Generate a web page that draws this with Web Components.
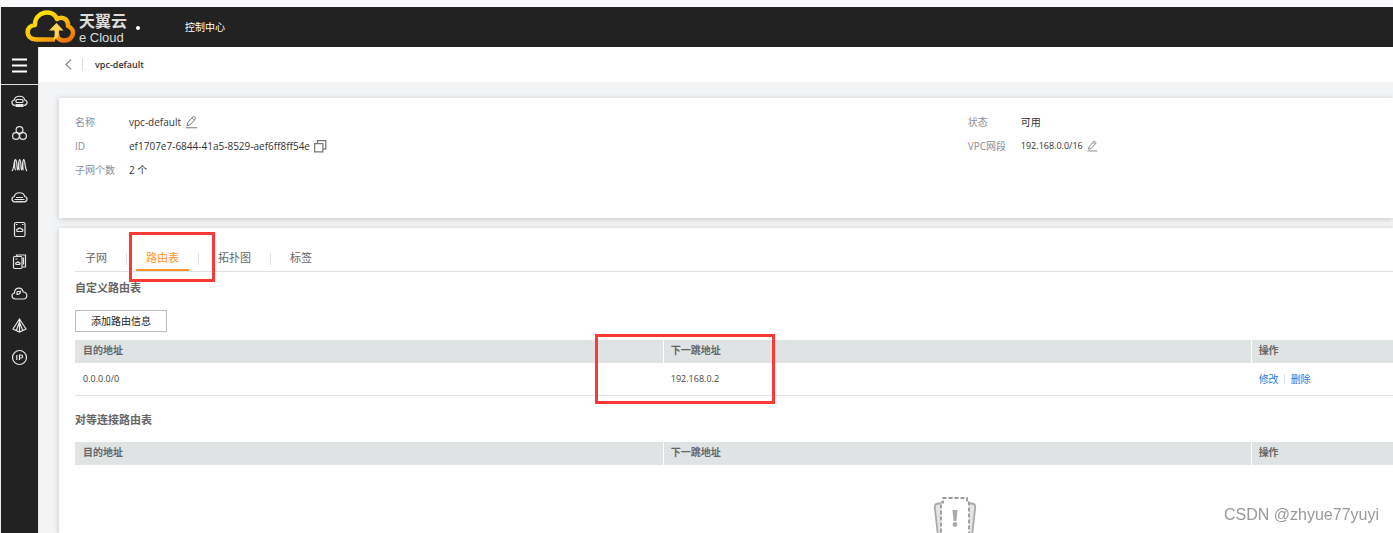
<!DOCTYPE html>
<html lang="zh-CN">
<head>
<meta charset="utf-8">
<title>控制中心</title>
<style>
  body { margin: 0; background: #f3f4f6; color: #333; font: 10px/16px "Open Sans", "Noto Sans CJK SC", sans-serif; overflow: hidden; }
</style>
</head>
<body>
<vpc-console>
  <top-bar slot="top">控制中心</top-bar>
  <side-nav slot="side"></side-nav>
  <crumb-bar slot="crumb">vpc-default</crumb-bar>
  <content-card>
    <info-grid>
      <info-item label="名称">vpc-default <icon-button icon="edit" label="修改名称"></icon-button></info-item>
      <info-item label="状态" short>可用</info-item>
      <info-item label="ID">ef1707e7-6844-41a5-8529-aef6ff8ff54e <icon-button icon="copy" label="复制"></icon-button></info-item>
      <info-item label="VPC网段" code short>192.168.0.0/16 <icon-button icon="edit" label="修改网段" small></icon-button></info-item>
      <info-item label="子网个数">2 个</info-item>
    </info-grid>
  </content-card>
  <content-card fill>
    <tab-bar tabs="子网,路由表,拓扑图,标签" current="1"></tab-bar>
    <route-section heading="自定义路由表" action="添加路由信息" rows="0.0.0.0/0,192.168.0.2" marked></route-section>
    <route-section heading="对等连接路由表"><empty-mark></empty-mark></route-section>
  </content-card>
</vpc-console>
<water-mark>CSDN @zhyue77yuyi</water-mark>

<script>
(function() {
  'use strict';

  const icons = {
    menu: '<path d="M1 2.500h15M1 8.500h15M1 14.500h15" stroke-width="2"/>',
    server: '<path d="M4.500 12.500C0 12.500 0 7.500 3.300 7 4.500 2 12.500 2 13.700 7c3.300.500 3.300 5.500-1.200 5.500"/><rect x="5" y="6.500" width="7" height="3" rx="1"/><path d="M4.500 12.500h8" stroke-width="3"/>',
    group: '<circle cx="8.500" cy="5" r="3.400"/><circle cx="5" cy="11" r="3.400"/><circle cx="12" cy="11" r="3.400"/>',
    wave: '<path d="M1 14C3.500 12 2.500 2.500 4.500 2.500S5.500 13 6.700 13 7 2.500 8.700 2.500 9.500 13 10.700 13 11 2.500 12.700 2.500 13.500 12 16 14M4.500 2.500C3 5 3.500 13 5 13M8.700 2.500C7 5 8 13 8.700 13M12.700 2.500C11 5 12 13 12.700 13"/>',
    disk: '<path d="M4.500 13C0 13 0 8 3.300 7.500 4.500 2.500 12.500 2.500 13.700 7.500c3.300.500 3.300 5.500-1.200 5.500z"/><path d="M5 8.500h7M3.500 10.500h10M4.500 12.500h8" />',
    card: '<rect x="3.500" y="1.500" width="10.500" height="14" rx="1.500"/><path d="M6.200 10.500c-1.200-1-.2-2.700.8-2.400.500-1.400 3-1.400 3.500 0 1.200-.300 2 1.400.800 2.400zM5 3.500h1.500M11 3.500h1.500"/>',
    cards: '<rect x="2.500" y="3.500" width="8.500" height="12" rx="1.200"/><path d="M5.500 3.500V2h9v12h-3.500M12.500 4.500v7M5 11.500c-.8-1 0-2 .8-1.800.400-1 1.800-1 2.200 0 .8-.200 1.500.8.8 1.800zM4.500 6h2"/>',
    cloud: '<path d="M4.500 14C-.2 13.500.2 8.500 3.500 8 3.500 2 11 1.500 12.200 7c5 0 4.500 6.800.300 7zM6 10V6.500M6 6.500h3.500M6 9.500C8 9.500 9.500 8.500 9.500 5.500"/>',
    cone: '<path d="M8.500 2 2 12l6.500 3L15 12zM8.500 2v13M8.500 5 5.500 13M8.500 5l3 8"/>',
    ip: '<circle cx="8.500" cy="8.500" r="7"/><path d="M5.800 6v5M8.500 11V6h1.500c2.200 0 2.200 3 0 3H8.500"/>',
    back: '<path d="M11.500 3 5.500 8.500l6 5.500"/>',
    edit: '<path d="M3.500 13 4.500 9.300 11.500 1.500l3 2.500L7.300 12zM9.800 3.500 12.500 6M2 15.500h14"/>',
    copy: '<path d="M2 5.500h10v10H2zM5.500 5.500V2H15.500v10H12" stroke-width="1.500"/>'
  };

  const svg = (name, size) => `<svg width="${size}" height="${size}" viewBox="0 0 17 17" fill="none" stroke="currentColor" stroke-width="1.200" aria-hidden="true">${icons[name]}</svg>`;

  const define = (name, render) => customElements.define(name, class extends HTMLElement {
    constructor() {
      super();
      this.attachShadow({mode: 'open'});
    }
    connectedCallback() {
      this.shadowRoot.innerHTML = render(this);
    }
  });

  define('vpc-console', () => `
    <style>
      :host { display: grid; grid-template: auto 1fr / auto 1fr; height: 100vh; border-top: 7px solid #fafafc; border-left: 1px solid #eee; box-sizing: border-box; overflow: hidden; }
      header { grid-column: 1 / 3; }
      section { display: flex; flex-direction: column; min-width: 0; min-height: 0; }
      main { display: flex; flex-direction: column; gap: 10px; flex: 1; min-height: 0; padding: 16px 0 0 20px; }
    </style>
    <header><slot name="top"></slot></header>
    <slot name="side"></slot>
    <section><slot name="crumb"></slot><main><slot></slot></main></section>`);

  define('top-bar', () => `
    <style>
      :host { display: flex; align-items: center; height: 40px; background: #222; color: #fff; padding-left: 24px; }
      .logo { display: flex; align-items: center; gap: 2px; color: #ddd; text-decoration: none; }
      .name { display: grid; width: 48px; padding-top: 3px; white-space: nowrap; }
      b { font: 700 16px/18px "Liberation Sans", "Noto Sans CJK SC", sans-serif; height: 17px; }
      i { font: 13px/15px "Liberation Sans", sans-serif; }
      .dot { width: 4px; height: 4px; border-radius: 50%; background: #fff; margin: 2px 45px 0 9px; }
    </style>
    <a class="logo" href="#">
      <svg width="52" height="34" viewBox="0 0 52 34" fill="none" aria-hidden="true">
        <defs><linearGradient id="gold" x1="0" y1="0" x2="1" y2="1"><stop offset="0" stop-color="#fff100"/><stop offset=".5" stop-color="#fdc00f"/><stop offset="1" stop-color="#ed6c00"/></linearGradient></defs>
        <path d="M30 29.500H11C-.5 29 .5 15.500 10 15 9.500 1 28.500-1.500 32 9c6-3.500 11.500 1 11 7 8.500 4 5.500 14-4 14.500-5 0-7-3-7-7" stroke="url(#gold)" stroke-width="4.500" stroke-linejoin="round"/>
        <path d="M24 20.500 31.500 13l7 7.500h-4.500c0 5-1 8.500-5.500 9.500 1-3 1.500-6 1-9.500z" fill="#ffd45a"/>
      </svg>
      <span class="name"><b>天翼云</b><i>e Cloud</i></span>
    </a>
    <span class="dot"></span>
    <slot></slot>`);

  define('side-nav', () => `
    <style>
      :host { display: block; width: 37px; background: #222; color: #fff; border-right: 1px solid #e4e5e8; }
      button { display: grid; place-items: center; width: 100%; height: 38px; padding: 0; border: 0; border-bottom: 1px solid #ddd; background: none; color: inherit; }
      nav { display: grid; }
      a { display: grid; place-items: center; height: 32px; color: #e6e6e6; }
    </style>
    <button aria-label="菜单">${svg('menu', 17)}</button>
    <nav>${['server', 'group', 'wave', 'disk', 'card', 'cards', 'cloud', 'cone', 'ip'].map(name => `<a href="#${name}" aria-label="${name}">${svg(name, 17)}</a>`).join('')}</nav>`);

  define('crumb-bar', () => `
    <style>
      :host { display: flex; align-items: center; height: 35px; background: #fff; padding-left: 22px; font-weight: 600; font-size: 9px; }
      a { display: flex; color: #777; padding-right: 6px; border-right: 1px solid #ddd; margin-right: 12px; height: 13px; align-items: center; }
    </style>
    <a href="#" aria-label="返回">${svg('back', 15)}</a>
    <slot></slot>`);

  define('content-card', () => `
    <style>
      :host { display: block; box-sizing: border-box; min-height: 120px; padding: 12px 0 0 16px; background: #fff; box-shadow: 0 1px 6px rgba(0, 0, 0, .2); }
      :host([fill]) { flex: 1; padding-top: 16px; }
    </style>
    <slot></slot>`);

  define('info-grid', () => `
    <style>:host { display: grid; grid-template-columns: 21fr 10fr; }</style>
    <slot></slot>`);

  define('info-item', el => `
    <style>
      :host { display: flex; align-items: center; height: 24px; }
      .label { width: 54px; color: #8a8e99; }
      :host([short]) .label { width: 53px; }
      .value { display: flex; align-items: center; }
      :host([code]) .value { font-size: 9px; }
    </style>
    <span class="label">${el.getAttribute('label')}</span>
    <span class="value"><slot></slot></span>`);

  define('icon-button', el => `
    <style>
      :host { display: flex; margin-left: 3px; }
      button { display: flex; padding: 0; border: 0; background: none; color: #777; }
    </style>
    <button aria-label="${el.getAttribute('label')}">${svg(el.getAttribute('icon'), el.hasAttribute('small') ? 12 : 14)}</button>`);

  define('tab-bar', el => {
    const current = Number(el.getAttribute('current'));
    return `
    <style>
      :host { display: flex; gap: 9px; height: 27px; border-bottom: 1px solid #dfe1e6; font-size: 11px; }
      button { position: relative; padding: 2px 10px 0; border: 0; border-bottom: 2px solid transparent; background: none; color: #666; font: inherit; }
      button[aria-selected=true] { color: #ff9326; border-color: #ff9326; }
      .rule { width: 1px; height: 12px; margin-top: 9px; background: #dfe1e6; }
      .mark { position: absolute; box-sizing: border-box; left: -7px; top: -12px; width: 86px; height: 50px; border: 3px solid #f93a37; pointer-events: none; }
    </style>
    ${el.getAttribute('tabs').split(',').map((tab, i) => `<button role="tab" aria-selected="${i === current}">${tab}${i === current ? '<span class="mark"></span>' : ''}</button>`).join('<span class="rule"></span>')}`;
  });

  define('route-section', el => {
    const action = el.getAttribute('action');
    const rows = el.hasAttribute('rows') ? el.getAttribute('rows').split(';') : [];
    return `
    <style>
      :host { display: block; }
      :host(:last-child) { padding-top: 8px; }
      h2 { margin: 0 0 7px; font-size: 11px; line-height: 31px; font-weight: 700; color: #666; }
      .add { display: block; height: 22px; margin-bottom: 8px; padding: 0 15px 1px; border: 1px solid #bbb; background: #fff; color: #222; font: inherit; }
      table { width: 100%; table-layout: fixed; border-collapse: separate; border-spacing: 0; }
      th, td { box-sizing: border-box; padding: 0 8px; text-align: left; }
      th { position: relative; height: 23px; padding: 0 7px 3px; background: #dfe3e4; color: #666; font-weight: 700; }
      th:first-child { padding-left: 8px; }
      th + th { border-left: 1px solid #fff; }
      td { height: 33px; border-bottom: 1px solid #dfe1e6; font-size: 9px; color: #444; }
      .links { font-size: 10px; }
      a { color: #2a7bde; text-decoration: none; }
      a + a { margin-left: 5px; padding-left: 6px; border-left: 1px solid #dfe1e6; line-height: 10px; display: inline-block; }
      .mark { position: absolute; box-sizing: border-box; left: -69px; top: -6px; width: 180px; height: 70px; border: 3px solid #f93a37; pointer-events: none; }
    </style>
    <h2>${el.getAttribute('heading')}</h2>
    ${action ? `<button class="add">${action}</button>` : ''}
    <table>
      <colgroup><col style="width: 44.6%"><col style="width: 44.6%"><col></colgroup>
      <thead><tr><th>目的地址</th><th>下一跳地址${el.hasAttribute('marked') ? '<span class="mark"></span>' : ''}</th><th>操作</th></tr></thead>
      <tbody>${rows.map(row => `<tr>${row.split(',').map(cell => `<td>${cell}</td>`).join('')}<td class="links"><a href="#edit">修改</a><a href="#delete">删除</a></td></tr>`).join('')}</tbody>
    </table>
    <slot></slot>`;
  });

  define('empty-mark', () => `
    <style>:host { display: block; padding: 32px 0 0 65%; }</style>
    <svg width="46" height="52" viewBox="0 0 46 52" fill="none" aria-hidden="true">
      <path d="M9 6.500H6Q2.500 7 2.800 10.500L6 39q.5 3 4 3h26q3.500 0 4-3l3.200-28.500Q43.500 7 40 6.500h-3" fill="#e4e4e4" stroke="#aaa" stroke-width="1.800"/>
      <path d="M9 5.500h2V1h24v4.500h2V42H9z" fill="#fff" stroke="#999" stroke-width="1.800" stroke-dasharray="4 2"/>
      <path d="M20.500 13h5l-1 11h-3z" fill="#aaa"/><circle cx="23" cy="27.500" r="2.400" fill="#aaa"/>
    </svg>`);

  define('water-mark', () => `
    <style>:host { position: fixed; right: 14px; bottom: 8px; font: 16px/20px "Liberation Sans", sans-serif; color: #999; text-shadow: 1px 1px 0 #fff; }</style>
    <slot></slot>`);
}());
</script>
</body>
</html>
